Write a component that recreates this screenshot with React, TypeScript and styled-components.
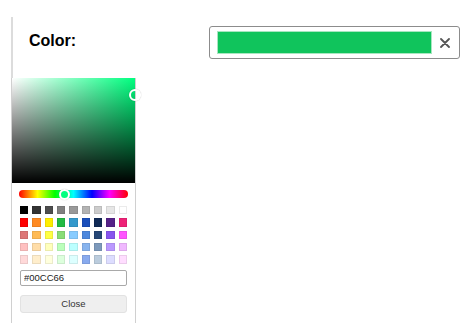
import React from "react";
import styled, { createGlobalStyle } from "styled-components";

const Global = createGlobalStyle`
  html, body { margin: 0; padding: 0; background: #fff; }
  body { font-family: "Liberation Sans", Arial, sans-serif; color: #000; }
  * { box-sizing: border-box; }
`;

const Page = styled.div`
  position: relative;
  width: 470px;
  height: 323px;
  overflow: hidden;
  padding-top: 17px;
`;

const Section = styled.div`
  margin-left: 11px;
  height: 306px;
  border-left: 2px solid #dcdcdc;
`;

const Row = styled.div`
  display: flex;
  align-items: flex-start;
  padding: 9px 0 0 16px;
`;

const Label = styled.div`
  width: 180px;
  margin-top: 6px;
  font-size: 16px;
  font-weight: 700;
  line-height: 18px;
`;

const Field = styled.div`
  width: 251px;
  height: 33px;
  border: 1px solid #8c8c8c;
  border-radius: 3px;
  display: flex;
  align-items: center;
  padding: 0 8px 0 7px;
  gap: 7px;
`;

const Preview = styled.div<{ $color: string }>`
  width: 216px;
  height: 23px;
  background: ${(p) => p.$color};
  border: 1px solid #a8e6c0;
`;

const Clear = styled.button`
  border: 0;
  background: none;
  padding: 0;
  width: 12px;
  height: 12px;
  display: flex;
  align-items: center;
  justify-content: center;
  cursor: pointer;
`;

const Popover = styled.div`
  position: absolute;
  left: 11px;
  top: 78px;
  width: 125px;
  background: #fff;
  border-left: 1px solid #d0d0d0;
  border-right: 1px solid #d0d0d0;
  padding-bottom: 12px;
`;

const Saturation = styled.div<{ $hue: number }>`
  position: relative;
  height: 105px;
  background: linear-gradient(to top, #000, rgba(0, 0, 0, 0)),
    linear-gradient(to right, #fff, hsl(${(p) => p.$hue}, 100%, 50%));
`;

const SatThumb = styled.div`
  position: absolute;
  width: 12px;
  height: 12px;
  margin: -6px 0 0 -6px;
  border: 2px solid #fff;
  border-radius: 50%;
  box-shadow: 0 0 1px rgba(0, 0, 0, 0.4);
`;

const Body = styled.div`
  padding: 7px 7px 0;
  display: flex;
  flex-direction: column;
`;

const HueBar = styled.div`
  position: relative;
  height: 8px;
  border-radius: 4px;
  background: linear-gradient(
    to right,
    #f00 0%,
    #ff0 17%,
    #0f0 33%,
    #0ff 50%,
    #00f 67%,
    #f0f 83%,
    #f00 100%
  );
`;

const HueThumb = styled.div<{ $hue: number }>`
  position: absolute;
  top: 50%;
  width: 11px;
  height: 11px;
  margin: -5.5px 0 0 -5.5px;
  border-radius: 50%;
  border: 2px solid #fff;
  background: hsl(${(p) => p.$hue}, 100%, 50%);
  box-shadow: 0 0 1px rgba(0, 0, 0, 0.3);
`;

const Grid = styled.div`
  display: grid;
  grid-template-columns: repeat(9, 1fr);
  gap: 4px;
  margin: 8px 1px 0;
`;

const Swatch = styled.div<{ $color: string }>`
  aspect-ratio: 1 / 1;
  background: ${(p) => p.$color};
  box-shadow: inset 0 0 0 1px rgba(0, 0, 0, 0.08);
`;

const HexInput = styled.input`
  margin: 6px 1px 0;
  height: 16px;
  border: 1px solid #a9a9a9;
  border-radius: 2px;
  padding: 0 0 0 3px;
  font-family: "Liberation Sans", Arial, sans-serif;
  font-size: 9.5px;
  color: #222;
  outline: none;
`;

const CloseButton = styled.button`
  margin: 9px 1px 0;
  height: 18px;
  border: 1px solid #e2e2e2;
  border-radius: 3px;
  background: #efefef;
  font-family: "Liberation Sans", Arial, sans-serif;
  font-size: 9.5px;
  color: #333;
  padding: 0;
`;

const swatches = [
  "#000000", "#333333", "#4d4d4d", "#808080", "#999999", "#b3b3b3", "#cccccc", "#e6e6e6", "#ffffff",
  "#ff0000", "#ff8a22", "#ffee00", "#22bb44", "#3399cc", "#1a4fbb", "#102a55", "#552288", "#ee2277",
  "#dd7777", "#ffbb55", "#ffff44", "#88dd77", "#88ccff", "#4d88dd", "#264777", "#8855ee", "#ff55ff",
  "#ffc0c0", "#ffdda8", "#ffffbb", "#bbffbb", "#bbffff", "#88b4ee", "#7d99bb", "#bb99ff", "#f0b8ff",
  "#ffd9d9", "#ffeecc", "#ffffdd", "#ddffdd", "#ddffff", "#88aaee", "#bbccdd", "#ddddff", "#ffddff",
];

export default function App() {
  const hue = 150;
  return (
    <Page>
      <Global />
      <Section>
        <Row>
          <Label>Color:</Label>
          <Field>
            <Preview $color="#10c45c" />
            <Clear aria-label="Clear">
              <svg width="10" height="10" viewBox="0 0 10 10">
                <path d="M1 1 L9 9 M9 1 L1 9" stroke="#555" strokeWidth="1.8" strokeLinecap="round" />
              </svg>
            </Clear>
          </Field>
        </Row>
      </Section>
      <Popover>
        <Saturation $hue={hue}>
          <SatThumb style={{ left: "100%", top: "17px" }} />
        </Saturation>
        <Body>
          <HueBar>
            <HueThumb $hue={hue} style={{ left: `${(hue / 360) * 100}%` }} />
          </HueBar>
          <Grid>
            {swatches.map((c, i) => (
              <Swatch key={i} $color={c} />
            ))}
          </Grid>
          <HexInput defaultValue="#00CC66" />
          <CloseButton>Close</CloseButton>
        </Body>
      </Popover>
    </Page>
  );
}
